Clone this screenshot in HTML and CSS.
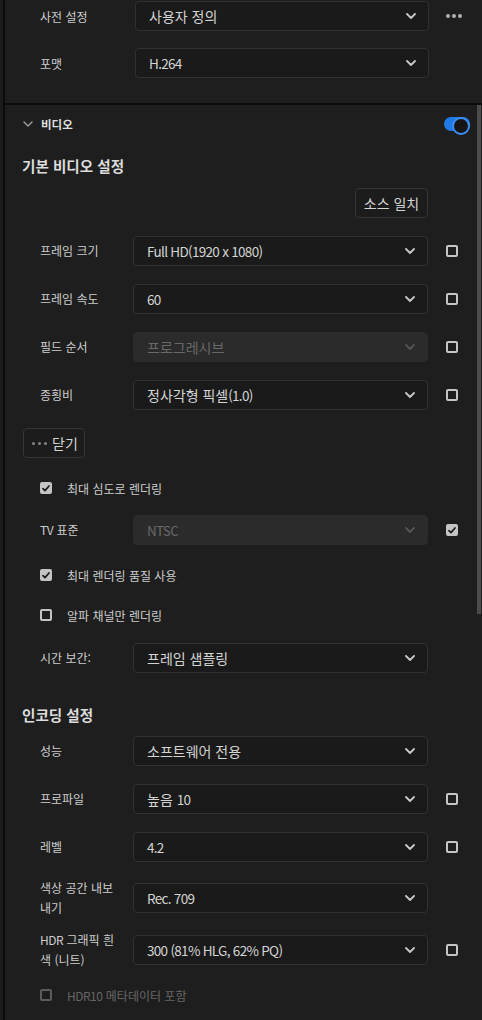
FILE: index.html
```html
<!DOCTYPE html>
<html lang="ko">
<head>
<meta charset="utf-8">
<title>내보내기 설정</title>
<link rel="stylesheet" href="styles.css">
</head>
<body>
<div class="app">
  <div class="gutter"></div>
  <div class="panel">
    <div class="top">
      <div class="trow">
        <span class="tlabel">사전 설정</span>
        <div class="select top-select"><span class="val">사용자 정의</span><svg class="chev" width="10" height="6" viewBox="0 0 10 6"><path d="M1 1l4 4 4-4" fill="none" stroke="currentColor" stroke-width="1.8" stroke-linecap="round" stroke-linejoin="round"/></svg></div>
        <span class="more"><svg width="16" height="4" viewBox="0 0 16 4"><circle cx="2" cy="2" r="2" fill="currentColor"/><circle cx="8" cy="2" r="2" fill="currentColor"/><circle cx="14" cy="2" r="2" fill="currentColor"/></svg></span>
      </div>
      <div class="trow">
        <span class="tlabel">포맷</span>
        <div class="select top-select"><span class="val lat">H.264</span><svg class="chev" width="10" height="6" viewBox="0 0 10 6"><path d="M1 1l4 4 4-4" fill="none" stroke="currentColor" stroke-width="1.8" stroke-linecap="round" stroke-linejoin="round"/></svg></div>
      </div>
    </div>

    <div class="scroll">
      <div class="content">
        <div class="sec-header">
          <svg class="sec-chev" width="10" height="6" viewBox="0 0 10 6"><path d="M1 1l4 4 4-4" fill="none" stroke="currentColor" stroke-width="1.5" stroke-linecap="round" stroke-linejoin="round"/></svg>
          <span class="sec-title">비디오</span>
          <span class="toggle"></span>
        </div>

        <div class="heading h-video">기본 비디오 설정</div>

        <div class="btnrow"><button class="btn">소스 일치</button></div>

        <div class="field">
          <span class="label">프레임 크기</span>
          <div class="select"><span class="val lat">Full HD(1920 x 1080)</span><svg class="chev" width="10" height="6" viewBox="0 0 10 6"><path d="M1 1l4 4 4-4" fill="none" stroke="currentColor" stroke-width="1.8" stroke-linecap="round" stroke-linejoin="round"/></svg></div>
          <span class="cb"></span>
        </div>
        <div class="field">
          <span class="label">프레임 속도</span>
          <div class="select"><span class="val lat">60</span><svg class="chev" width="10" height="6" viewBox="0 0 10 6"><path d="M1 1l4 4 4-4" fill="none" stroke="currentColor" stroke-width="1.8" stroke-linecap="round" stroke-linejoin="round"/></svg></div>
          <span class="cb"></span>
        </div>
        <div class="field">
          <span class="label">필드 순서</span>
          <div class="select disabled"><span class="val">프로그레시브</span><svg class="chev" width="10" height="6" viewBox="0 0 10 6"><path d="M1 1l4 4 4-4" fill="none" stroke="currentColor" stroke-width="1.8" stroke-linecap="round" stroke-linejoin="round"/></svg></div>
          <span class="cb"></span>
        </div>
        <div class="field">
          <span class="label">종횡비</span>
          <div class="select"><span class="val">정사각형 픽셀<span class="lat">(1.0)</span></span><svg class="chev" width="10" height="6" viewBox="0 0 10 6"><path d="M1 1l4 4 4-4" fill="none" stroke="currentColor" stroke-width="1.8" stroke-linecap="round" stroke-linejoin="round"/></svg></div>
          <span class="cb"></span>
        </div>

        <button class="btn close-btn"><svg width="15" height="3" viewBox="0 0 15 3"><circle cx="1.5" cy="1.5" r="1.5" fill="currentColor"/><circle cx="7.5" cy="1.5" r="1.5" fill="currentColor"/><circle cx="13.5" cy="1.5" r="1.5" fill="currentColor"/></svg><span>닫기</span></button>

        <div class="check-row cr-1">
          <span class="cb checked"><svg width="8" height="7" viewBox="0 0 8 7"><path d="M1 3.6l2 2 4-4.6" fill="none" stroke="currentColor" stroke-width="1.7" stroke-linecap="round" stroke-linejoin="round"/></svg></span>
          <span class="ctext">최대 심도로 렌더링</span>
        </div>

        <div class="field f-tv">
          <span class="label"><span class="lat-s">TV</span> 표준</span>
          <div class="select disabled"><span class="val lat">NTSC</span><svg class="chev" width="10" height="6" viewBox="0 0 10 6"><path d="M1 1l4 4 4-4" fill="none" stroke="currentColor" stroke-width="1.8" stroke-linecap="round" stroke-linejoin="round"/></svg></div>
          <span class="cb checked"><svg width="8" height="7" viewBox="0 0 8 7"><path d="M1 3.6l2 2 4-4.6" fill="none" stroke="currentColor" stroke-width="1.7" stroke-linecap="round" stroke-linejoin="round"/></svg></span>
        </div>

        <div class="check-row cr-2">
          <span class="cb checked"><svg width="8" height="7" viewBox="0 0 8 7"><path d="M1 3.6l2 2 4-4.6" fill="none" stroke="currentColor" stroke-width="1.7" stroke-linecap="round" stroke-linejoin="round"/></svg></span>
          <span class="ctext">최대 렌더링 품질 사용</span>
        </div>
        <div class="check-row cr-3">
          <span class="cb"></span>
          <span class="ctext">알파 채널만 렌더링</span>
        </div>

        <div class="field f-time">
          <span class="label">시간 보간:</span>
          <div class="select"><span class="val">프레임 샘플링</span><svg class="chev" width="10" height="6" viewBox="0 0 10 6"><path d="M1 1l4 4 4-4" fill="none" stroke="currentColor" stroke-width="1.8" stroke-linecap="round" stroke-linejoin="round"/></svg></div>
        </div>

        <div class="heading h-enc">인코딩 설정</div>

        <div class="field f-perf">
          <span class="label">성능</span>
          <div class="select"><span class="val">소프트웨어 전용</span><svg class="chev" width="10" height="6" viewBox="0 0 10 6"><path d="M1 1l4 4 4-4" fill="none" stroke="currentColor" stroke-width="1.8" stroke-linecap="round" stroke-linejoin="round"/></svg></div>
        </div>
        <div class="field">
          <span class="label">프로파일</span>
          <div class="select"><span class="val">높음 <span class="lat">10</span></span><svg class="chev" width="10" height="6" viewBox="0 0 10 6"><path d="M1 1l4 4 4-4" fill="none" stroke="currentColor" stroke-width="1.8" stroke-linecap="round" stroke-linejoin="round"/></svg></div>
          <span class="cb"></span>
        </div>
        <div class="field">
          <span class="label">레벨</span>
          <div class="select"><span class="val lat">4.2</span><svg class="chev" width="10" height="6" viewBox="0 0 10 6"><path d="M1 1l4 4 4-4" fill="none" stroke="currentColor" stroke-width="1.8" stroke-linecap="round" stroke-linejoin="round"/></svg></div>
          <span class="cb"></span>
        </div>
        <div class="field tall f-color">
          <span class="label">색상 공간 내보<br>내기</span>
          <div class="select"><span class="val lat">Rec. 709</span><svg class="chev" width="10" height="6" viewBox="0 0 10 6"><path d="M1 1l4 4 4-4" fill="none" stroke="currentColor" stroke-width="1.8" stroke-linecap="round" stroke-linejoin="round"/></svg></div>
        </div>
        <div class="field tall f-hdr">
          <span class="label"><span class="lat-s">HDR</span> 그래픽 흰<br>색 (니트)</span>
          <div class="select"><span class="val lat">300 (81% HLG, 62% PQ)</span><svg class="chev" width="10" height="6" viewBox="0 0 10 6"><path d="M1 1l4 4 4-4" fill="none" stroke="currentColor" stroke-width="1.8" stroke-linecap="round" stroke-linejoin="round"/></svg></div>
          <span class="cb"></span>
        </div>

        <div class="check-row cr-4 dim">
          <span class="cb"></span>
          <span class="ctext"><span class="lat-s">HDR10</span> 메타데이터 포함</span>
        </div>
      </div>
      <div class="scrollbar"><div class="thumb"></div></div>
    </div>
  </div>
</div>
</body>
</html>
```

FILE: styles.css
```css
* { box-sizing: border-box; }

html, body {
  margin: 0;
  padding: 0;
  background: #1e1e1e;
}

body {
  width: 482px;
  height: 1020px;
  overflow: hidden;
  font-family: "Noto Sans CJK KR", "Noto Sans", sans-serif;
  color: #cdcdcd;
}

.app {
  display: flex;
  height: 1020px;
}

.gutter {
  width: 3px;
  background: #1b1b1b;
}

.panel {
  flex: 1;
  min-width: 0;
  display: flex;
  flex-direction: column;
  border-left: 2px solid #0b0b0b;
  background: #1e1e1e;
}

/* top area */
.top {
  height: 103px;
  padding-top: 1px;
}

.trow {
  display: flex;
  align-items: center;
  height: 30px;
  padding-left: 35px;
}

.trow + .trow { margin-top: 17px; }

.tlabel {
  width: 95px;
  font-size: 12px;
  color: #cdcdcd;
}

.more {
  display: flex;
  margin-left: 17px;
  color: #b0b0b0;
}

/* select */
.select {
  width: 295px;
  height: 30px;
  display: flex;
  align-items: center;
  justify-content: space-between;
  padding: 0 12px 0 13px;
  background: #1a1a1a;
  border: 1px solid #313131;
  border-radius: 4px;
  font-size: 14px;
  color: #d4d4d4;
}

.top-select { width: 294px; }

.select .chev { color: #c8c8c8; flex: none; }

.select.disabled {
  background: #2b2b2b;
  border-color: #2b2b2b;
  color: #686868;
}

.select.disabled .chev { color: #545454; }

.val { white-space: nowrap; }

/* condensed latin text (narrow UI face in the original) */
.lat {
  font-size: 13.5px;
  letter-spacing: -0.7px;
}

.lat-s {
  letter-spacing: -0.5px;
}

/* scroll area */
.scroll {
  flex: 1;
  display: flex;
  border-top: 2px solid #0b0b0b;
  min-height: 0;
}

.content {
  flex: 1;
  padding-left: 17px;
}

.scrollbar {
  width: 5px;
}

.thumb {
  width: 4px;
  height: 509px;
  background: #4b4b4b;
}

/* section header */
.sec-header {
  height: 37px;
  display: flex;
  align-items: center;
  padding-right: 7px;
}

.sec-chev {
  color: #9a9a9a;
  margin-left: 1px;
}

.sec-title {
  margin-left: 8px;
  font-size: 11.5px;
  font-weight: 700;
  color: #dedede;
  flex: 1;
}

.toggle {
  position: relative;
  width: 26px;
  height: 14px;
  border-radius: 7px;
  background: #1f7ae8;
}

.toggle::after {
  content: "";
  position: absolute;
  right: 0;
  top: 0;
  width: 14px;
  height: 14px;
  border-radius: 50%;
  border: 2px solid #3b8ff0;
  background: #161616;
}

.heading {
  height: 20px;
  line-height: 20px;
  font-size: 14.6px;
  font-weight: 700;
  color: #dcdcdc;
}

.h-video { margin-top: 14px; }
.h-enc { margin-top: 32px; }

.btnrow {
  margin-top: 12px;
  width: 406px;
  display: flex;
  justify-content: flex-end;
}

.btn {
  height: 30px;
  padding: 0 8px;
  background: #1c1c1c;
  border: 1px solid #363636;
  border-radius: 4px;
  font-family: inherit;
  font-size: 14px;
  color: #d4d4d4;
  display: flex;
  align-items: center;
  white-space: nowrap;
}

.btnrow .btn {
  width: 73px;
  padding: 0;
  justify-content: center;
}

.close-btn {
  margin-top: 18px;
  margin-left: 1px;
  width: 62px;
  padding: 0 0 0 8px;
  gap: 5px;
}

.close-btn svg { color: #858585; }

/* fields */
.field {
  display: flex;
  align-items: center;
  height: 30px;
  padding-left: 18px;
  margin-top: 18px;
}

.field.tall { height: 39px; }

.label {
  width: 93px;
  flex: none;
  font-size: 12px;
  line-height: 19.5px;
  color: #cdcdcd;
}

.cb {
  width: 12px;
  height: 12px;
  flex: none;
  border: 2px solid #c4c4c4;
  border-radius: 2px;
  display: flex;
  align-items: center;
  justify-content: center;
}

.field .cb { margin-left: 18px; }

.cb.checked {
  background: #c4c4c4;
  color: #1b1b1b;
}

.check-row {
  display: flex;
  align-items: center;
  height: 24px;
  padding-left: 18px;
}

.ctext {
  margin-left: 15px;
  font-size: 12px;
  color: #cdcdcd;
}

.check-row.dim .cb { border-color: #5c5c5c; }
.check-row.dim .ctext { color: #666666; }

.cr-1 { margin-top: 18px; }
.f-tv { margin-top: 15px; }
.cr-2 { margin-top: 18px; }
.cr-3 { margin-top: 16px; }
.f-time { margin-top: 16px; }
.f-perf { margin-top: 11px; }
.f-color { margin-top: 16px; }
.f-hdr { margin-top: 13px; }
.cr-4 { margin-top: 14px; }
```
